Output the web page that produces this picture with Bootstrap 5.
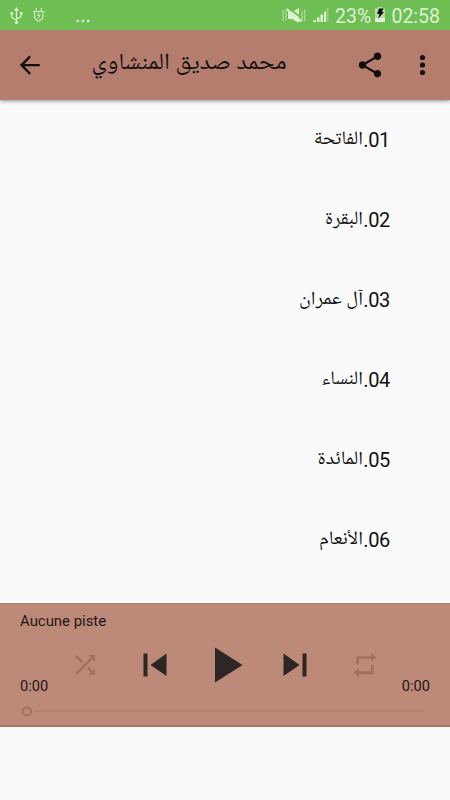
<!DOCTYPE html>
<html lang="ar">
<head>
<meta charset="utf-8">
<meta name="viewport" content="width=device-width, initial-scale=1">
<title>محمد صديق المنشاوي</title>
<link href="https://cdn.jsdelivr.net/npm/bootstrap@5.3.0/dist/css/bootstrap.min.css" rel="stylesheet">
<style>
body{background:#fafafa;font-family:Roboto,"Liberation Sans",sans-serif;color:#111;height:800px;overflow:hidden}
svg{display:block;flex:none}
.status{height:30px;background:#6ebe53;color:#dcf3d3;font-size:19.5px;line-height:33px}
.clock{padding-right:10px}
.appbar{height:70px;background:#b57d6d;box-shadow:0 1px 4px rgba(0,0,0,.45);clip-path:inset(0 0 -8px 0)}
.arabic{font-family:"Noto Naskh Arabic UI","Noto Naskh Arabic","Noto Sans Arabic","DejaVu Sans",sans-serif;fill:#111;overflow:visible}
.back{margin-left:14.5px}
.tracks{height:503px;overflow:hidden}
.track{height:80px;padding-right:60px;font-size:20px;line-height:80px}
.track span{letter-spacing:-.35px}
.player{height:124px;background:#bd8979;border-top:1px solid #a98579;border-bottom:2px solid #a77469;font-size:14.9px;color:#1d1817}
.track-name{height:34px;line-height:34px;padding-left:20px}
.controls{height:54px;padding:0 20px}
.controls svg{margin-right:40px}
.time{line-height:20px;padding-top:38px;width:50px;font-size:14.6px}
.controls .shuffle{margin-top:12px}
.controls .repeat{margin-right:0}
.dim{color:#a17264}
.solid{color:#2d2624}
</style>
</head>
<body>
<header>
<div class="status d-flex">
<svg width="275" height="30" fill="none" stroke="currentColor" stroke-width="1.2">
<path d="M16.500 9v13M11.700 13v3.200q0 2 4.800 3.800M21.300 13v2.600q0 1.800-4.800 3.200"/>
<g fill="currentColor" stroke="none"><path d="M16.500 7l2.500 4h-5z"/><circle cx="16.500" cy="22.500" r="1.600"/><circle cx="11.800" cy="13.400" r="1.400"/><path d="M20 12h2.600v2.600H20z"/><circle cx="77.700" cy="21" r="1.300"/><circle cx="83" cy="21" r="1.300"/><circle cx="88.200" cy="21" r="1.300"/></g>
<g opacity=".85"><path d="M36.200 8v3M41.300 8v3M33 11.500h11.500M34.500 12v4.500q0 3 3.200 3.500v2M43 12v4.500q0 3-3.200 3.500v2"/><path d="M39.300 12.500l-1.800 3h2.600l-1.800 3" stroke-width="1"/></g>
</svg>
<svg width="60" height="30">
<path d="M13 12h4l7-4v15l-7-4h-4z" fill="currentColor"/>
<path d="M13 7.500l16 12.500" stroke="#6ebe53" stroke-width="1.600"/><path d="M11.500 9l15 12.500" stroke="currentColor" stroke-width="2"/>
<path d="M8.500 9.500l-1 2 1 2-1 2 1 2-1 2 1 2M11.300 10.500l-1 2 1 2-1 2 1 2-1 2M26.500 10.500l1 2-1 2 1 2-1 2 1 2M29.300 9.500l1 2-1 2 1 2-1 2 1 2-1 2" fill="none" stroke="currentColor" stroke-width=".8"/>
<g fill="currentColor"><path d="M38.300 20h2.700v2h-2.700zM42 17.500h2.500V22H42zM45.500 14.500H48V22h-2.500zM49 11.500h2V22h-2z"/><path opacity=".35" d="M51.500 8h2v14h-2z"/></g>
</svg>
<span class="pe-1">23%</span>
<svg width="11" height="30"><path d="M2.500 7h5v1.500H10V22H0V8.500h2.500z" fill="#b4dfa5"/><path d="M0 18h10v4H0z" fill="#e4f5dd"/><path d="M4 8.500h4.500L7 12h2L3 19l1.500-5H2z" fill="#111"/></svg>
<span class="clock ms-auto">02:58</span>
</div>
<div class="appbar d-flex align-items-center">
<svg class="back" width="30" height="30" viewBox="0 0 24 24" fill="#140e0c"><path d="M19.800 11.100H7.500l5.200-5.400-1.200-1.300L3.900 12l7.600 7.700 1.200-1.300-5.200-5.400h12.300z"/></svg>
<svg class="arabic" width="241" height="70"><text x="241.500" y="41.500" font-size="23" direction="rtl" textLength="195" lengthAdjust="spacingAndGlyphs">محمد صديق المنشاوي</text></svg>
<svg class="ms-auto" width="30" height="30" viewBox="0 0 24 24" fill="#140e0c"><path d="M18 16.080c-.76 0-1.440.3-1.960.77L8.910 12.700c.05-.23.09-.46.09-.7s-.04-.47-.09-.7l7.050-4.110c.54.5 1.250.81 2.040.81 1.660 0 3-1.340 3-3s-1.340-3-3-3-3 1.340-3 3c0 .24.04.47.09.7L8.040 9.810C7.500 9.310 6.790 9 6 9c-1.660 0-3 1.340-3 3s1.340 3 3 3c.79 0 1.500-.31 2.040-.81l7.120 4.160c-.05.21-.08.43-.08.65 0 1.610 1.310 2.920 2.920 2.920s2.920-1.310 2.920-2.920-1.310-2.920-2.920-2.920z"/></svg>
<svg width="65" height="30" fill="#140e0c"><circle cx="37.500" cy="7.500" r="2.600"/><circle cx="37.500" cy="15" r="2.600"/><circle cx="37.500" cy="22.500" r="2.600"/></svg>
</div>
</header>
<main class="tracks">
<div class="track d-flex justify-content-end"><svg class="arabic" width="85" height="80"><text x="85" y="47" font-size="19" direction="rtl" textLength="49.500" lengthAdjust="spacingAndGlyphs">الفاتحة</text></svg><span>.01</span></div>
<div class="track d-flex justify-content-end"><svg class="arabic" width="85" height="80"><text x="85" y="47" font-size="19" direction="rtl" textLength="38" lengthAdjust="spacingAndGlyphs">البقرة</text></svg><span>.02</span></div>
<div class="track d-flex justify-content-end"><svg class="arabic" width="85" height="80"><text x="85" y="47" font-size="19" direction="rtl" textLength="64" lengthAdjust="spacingAndGlyphs">آل عمران</text></svg><span>.03</span></div>
<div class="track d-flex justify-content-end"><svg class="arabic" width="85" height="80"><text x="85" y="47" font-size="19" direction="rtl" textLength="41.500" lengthAdjust="spacingAndGlyphs">النساء</text></svg><span>.04</span></div>
<div class="track d-flex justify-content-end"><svg class="arabic" width="85" height="80"><text x="85" y="47" font-size="19" direction="rtl" textLength="45.500" lengthAdjust="spacingAndGlyphs">المائدة</text></svg><span>.05</span></div>
<div class="track d-flex justify-content-end"><svg class="arabic" width="85" height="80"><text x="85" y="47" font-size="19" direction="rtl" textLength="44" lengthAdjust="spacingAndGlyphs">الأنعام</text></svg><span>.06</span></div>
</main>
<footer class="player">
<div class="track-name">Aucune piste</div>
<div class="controls d-flex">
<span class="time">0:00</span>
<svg class="dim shuffle" width="30" height="30" viewBox="0 0 24 24" fill="currentColor"><path d="M10.590 9.170L5.410 4 4 5.410l5.170 5.170 1.420-1.410zM14.500 4l2.040 2.040L4 18.590 5.410 20 17.960 7.460 20 9.500V4h-5.500zm.33 9.410l-1.410 1.410 3.130 3.130L14.500 20H20v-5.500l-2.040 2.040-3.130-3.130z"/></svg>
<svg class="solid" width="30" height="54" fill="currentColor"><path d="M3.500 15.500h4v23h-4zM26.500 15.500v22.500L10.500 27z"/></svg>
<svg class="solid overflow-visible" width="30" height="54" fill="currentColor"><path d="M5 9.500L32.500 27 5 44.500z"/></svg>
<svg class="solid" width="30" height="54" fill="currentColor"><path d="M3.500 15.500v22.500L19.500 27zM22.500 15.500h4v23h-4z"/></svg>
<svg class="dim repeat" width="30" height="54" fill="currentColor"><path d="M6.200 18.200h15V15l5 4.500-5 4.500v-3.200H9v5.500H6.200zM23.800 36.200h-15v3.300l-5-5 5-4.500v3.200H21v-6.500h2.800z"/></svg>
<span class="time ms-auto text-end">0:00</span>
</div>
<svg class="dim" width="450" height="33"><path d="M34 19h390" stroke="#b38172" stroke-width="2"/><circle cx="27" cy="19.500" r="4" fill="none" stroke="currentColor" stroke-width="2"/></svg>
</footer>
</body>
</html>
